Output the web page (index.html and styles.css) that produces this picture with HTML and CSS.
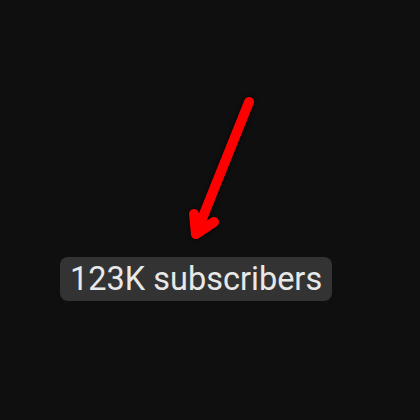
FILE: index.html
```html
<!DOCTYPE html>
<html>
<head>
<meta charset="utf-8">
<link rel="stylesheet" href="styles.css">
</head>
<body>
<div class="stage">
  <svg class="arrow" width="420" height="420" viewBox="0 0 420 420">
    <g fill="none" stroke="#ff0000" stroke-width="10" stroke-linecap="round" stroke-linejoin="round">
      <path d="M249 102 L196 234"/>
      <path d="M194 214 L196 234 L214 222"/>
    </g>
  </svg>
  <div class="badge">123K subscribers</div>
</div>
</body>
</html>
```
FILE: styles.css
```css
html, body {
  margin: 0;
  padding: 0;
  background: #0f0f0f;
}
.stage {
  position: relative;
  width: 420px;
  height: 420px;
  padding: 257px 0 0 60px;
  box-sizing: border-box;
}
.arrow {
  position: absolute;
  left: 0;
  top: 0;
  filter: drop-shadow(0 0 2px rgba(0,0,0,0.9));
}
.badge {
  display: inline-block;
  background: #333333;
  color: #e8e8e8;
  font-family: Roboto, "Liberation Sans", sans-serif;
  font-size: 32.5px;
  line-height: 38px;
  padding: 3px 10px 3px 10px;
  border-radius: 8px;
}
```
